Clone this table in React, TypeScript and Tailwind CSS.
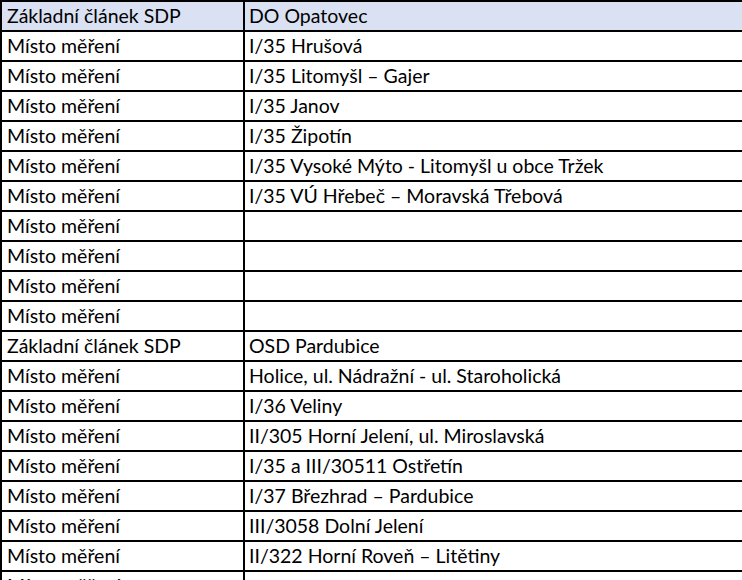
const rows: [string, string, boolean?][] = [
  ["Základní článek SDP", "DO Opatovec", true],
  ["Místo měření", "I/35 Hrušová"],
  ["Místo měření", "I/35 Litomyšl – Gajer"],
  ["Místo měření", "I/35 Janov"],
  ["Místo měření", "I/35 Žipotín"],
  ["Místo měření", "I/35 Vysoké Mýto - Litomyšl u obce Tržek"],
  ["Místo měření", "I/35 VÚ Hřebeč – Moravská Třebová"],
  ["Místo měření", ""],
  ["Místo měření", ""],
  ["Místo měření", ""],
  ["Místo měření", ""],
  ["Základní článek SDP", "OSD Pardubice"],
  ["Místo měření", "Holice, ul. Nádražní - ul. Staroholická"],
  ["Místo měření", "I/36 Veliny"],
  ["Místo měření", "II/305 Horní Jelení, ul. Miroslavská"],
  ["Místo měření", "I/35 a III/30511 Ostřetín"],
  ["Místo měření", "I/37 Březhrad – Pardubice"],
  ["Místo měření", "III/3058 Dolní Jelení"],
  ["Místo měření", "II/322 Horní Roveň – Litětiny"],
  ["Místo měření", ""],
];

export default function App() {
  return (
    <div className="w-[742px] h-[580px] overflow-hidden bg-white text-black font-['Lato',sans-serif] text-[19.5px]">
      <div className="border-t-2 border-black">
        {rows.map(([a, b, head], i) => (
          <div
            key={i}
            className={`flex h-[30px] border-b-2 border-black ${head ? "bg-[#d9e1f2]" : "bg-white"}`}
          >
            <div className="w-[245px] shrink-0 border-l-2 border-r-2 border-black pl-[5px] flex items-center whitespace-nowrap">
              {a}
            </div>
            <div className="flex-1 pl-[4px] flex items-center whitespace-nowrap">{b}</div>
          </div>
        ))}
      </div>
    </div>
  );
}
